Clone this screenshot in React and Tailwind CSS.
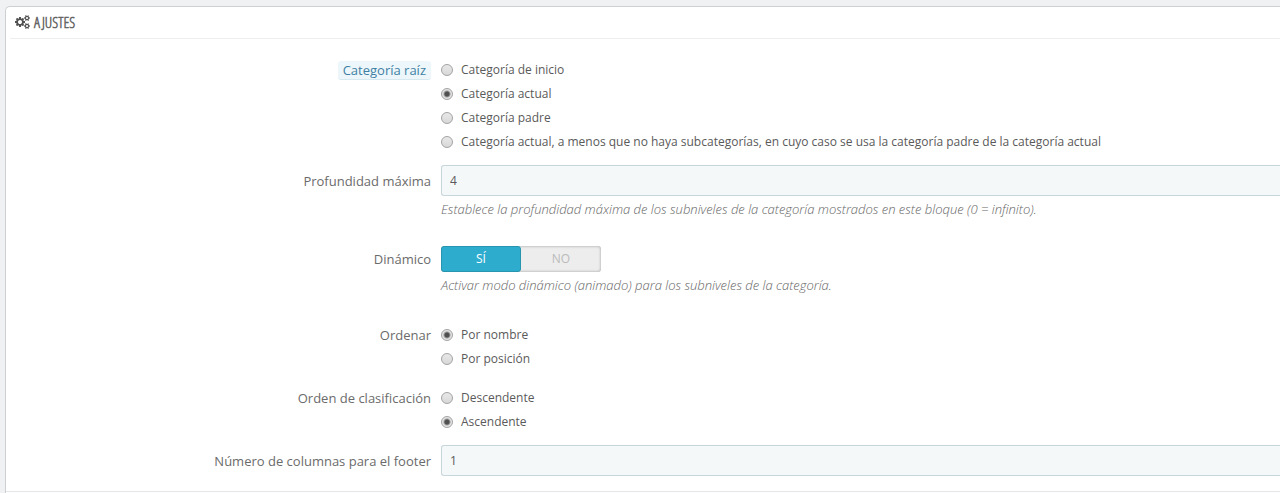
import { useState } from "react";

const SMALL_COG_TOP =
  "M1920 314v140q0 16-149 31-12 27-30 52 51 113 51 138 0 4-4 7-122 71-124 71-8 0-46-47t-52-68q-20 2-30 2t-30-2q-14 21-52 68t-46 47q-2 0-124-71-4-3-4-7 0-25 51-138-18-25-30-52-149-15-149-31v-140q0-16 149-31 13-29 30-52-51-113-51-138 0-4 4-7 4-2 35-20t59-34 30-16q8 0 46 46.5t52 67.5q20-2 30-2t30 2q51-71 92-112l6-2q4 0 124 70 4 3 4 7 0 25-51 138 17 23 30 52 149 15 149 31z";
const SMALL_COG_BOTTOM =
  "M1920 1338v140q0 16-149 31-12 27-30 52 51 113 51 138 0 4-4 7-122 71-124 71-8 0-46-47t-52-68q-20 2-30 2t-30-2q-14 21-52 68t-46 47q-2 0-124-71-4-3-4-7 0-25 51-138-18-25-30-52-149-15-149-31v-140q0-16 149-31 13-29 30-52-51-113-51-138 0-4 4-7 4-2 35-20t59-34 30-16q8 0 46 46.5t52 67.5q20-2 30-2t30 2q51-71 92-112l6-2q4 0 124 70 4 3 4 7 0 25-51 138 17 23 30 52 149 15 149 31z";
const LARGE_COG =
  "M896 896q0-106-75-181t-181-75-181 75-75 181 75 181 181 75 181-75 75-181zM1280 805v185q0 10-7 19.5t-16 10.5l-155 24q-11 35-32 76 34 48 90 115 7 11 7 20 0 12-7 19-23 30-82.5 89.5t-78.5 59.5q-11 0-21-7l-115-90q-37 19-77 31-11 108-23 155-7 24-30 24h-186q-11 0-20-7.5t-10-17.5l-23-153q-34-10-75-31l-118 89q-7 7-20 7-11 0-21-8-144-133-144-160 0-9 7-19 10-14 41-53t47-61q-23-44-35-82l-152-24q-10-1-17-9.5t-7-19.5v-185q0-10 7-19.5t16-10.5l155-24q11-35 32-76-34-48-90-115-7-11-7-20 0-12 7-20 22-30 82-89t79-59q11 0 21 7l115 90q34-18 77-32 11-108 23-154 7-24 30-24h186q11 0 20 7.5t10 17.5l23 153q34 10 75 31l118-89q8-7 20-7 11 0 21 8 144 133 144 160 0 8-7 19-12 16-42 54t-45 60q23 48 34 82l152 23q10 2 17 10.5t7 19.5z";
const HOLES =
  "M1664 1408q0-52-38-90t-90-38-90 38-38 90q0 53 37.5 90.5t90.5 37.5 90.5-37.5 37.5-90.5zM1664 384q0-52-38-90t-90-38-90 38-38 90q0 53 37.5 90.5t90.5 37.5 90.5-37.5 37.5-90.5z";

function CogsIcon() {
  return (
    <svg viewBox="0 0 1920 1792" className="h-3.5 w-[15px] shrink-0 text-[#505050]" fill="currentColor" aria-hidden="true">
      <path fillRule="evenodd" d={LARGE_COG + SMALL_COG_TOP + SMALL_COG_BOTTOM + HOLES} />
    </svg>
  );
}

function Row({ label, children, className = "" }) {
  return (
    <div className={`flex gap-2.5 ${className}`}>
      <div className="flex w-[425px] shrink-0 justify-end text-[13px] leading-6 text-[#6b6b6b]">{label}</div>
      <div className="min-w-0 flex-1">{children}</div>
    </div>
  );
}

function RadioRow({ label, name, options, initial, className }) {
  const [value, setValue] = useState(initial);
  return (
    <Row label={<span id={`${name}-label`}>{label}</span>} className={className}>
      <div role="radiogroup" aria-labelledby={`${name}-label`}>
        {options.map((text) => (
          <label key={text} className="flex h-6 items-center gap-2 text-xs text-[#5a5a5a]">
            <input
              type="radio"
              name={name}
              checked={value === text}
              onChange={() => setValue(text)}
              className="size-3 shrink-0 appearance-none rounded-full border border-[#a5a5a5] bg-[#dedede] bg-linear-to-b from-[#e8e8e8] to-[#d8d8d8] checked:bg-[radial-gradient(circle,#505050_0_2px,#e3e3e3_4px)]"
            />
            <span>{text}</span>
          </label>
        ))}
      </div>
    </Row>
  );
}

function TextRow({ id, label, value, hint, className }) {
  return (
    <Row label={<label htmlFor={id} className="pt-1">{label}</label>} className={className}>
      <input
        id={id}
        type="text"
        defaultValue={value}
        className="block h-[31px] w-full rounded-l-[3px] border border-r-0 border-[#c7d6db] bg-[#f5f8f9] px-2 text-xs text-[#5a5a5a]"
      />
      {hint && <Hint>{hint}</Hint>}
    </Row>
  );
}

function Hint({ children }) {
  return <p className="mt-[3px] text-[13px] leading-5 font-light text-[#666] italic">{children}</p>;
}

function Switch() {
  const [on, setOn] = useState(true);
  const active = "border border-[#2794b0] bg-[#2eacce] text-white rounded-[3px]";
  const idle = "text-[#bbb]";
  return (
    <div
      role="group"
      aria-labelledby="dinamico-label"
      className="flex h-[26px] w-40 rounded-[3px] bg-[#ededed] text-xs shadow-[inset_0_0_3px_rgba(0,0,0,0.35)]"
    >
      <button type="button" aria-pressed={on} onClick={() => setOn(true)} className={`w-1/2 ${on ? active : idle}`}>
        SÍ
      </button>
      <button type="button" aria-pressed={!on} onClick={() => setOn(false)} className={`w-1/2 ${on ? idle : active}`}>
        NO
      </button>
    </div>
  );
}

export default function App() {
  return (
    <main className="min-h-screen overflow-hidden bg-[#eff1f2] pt-1.5 pl-[5px] font-['Open_Sans',sans-serif]">
      <form className="rounded-tl-[5px] border-t border-l border-[#cdd0d3] bg-white">
        <h1 className="ml-1 flex h-8 items-center gap-1 border-b border-[#eee] pb-px pl-[5px] font-['Open_Sans_Condensed_Light','Liberation_Sans_Narrow','Roboto_Condensed',sans-serif] text-[15px] leading-5 font-bold text-[#666]">
          <CogsIcon />
          AJUSTES
        </h1>
        <div className="pt-[19px] pb-[15px]">
          <RadioRow
            name="raiz"
            label={
              <span className="mt-[3px] block rounded-[3px] border-b border-[#d6e9f0] bg-[#edf7fb] px-[5px] leading-[18px] text-[#3f7fa3]">
                Categoría raíz
              </span>
            }
            initial="Categoría actual"
            options={[
              "Categoría de inicio",
              "Categoría actual",
              "Categoría padre",
              "Categoría actual, a menos que no haya subcategorías, en cuyo caso se usa la categoría padre de la categoría actual",
            ]}
          />
          <TextRow
            id="profundidad"
            label="Profundidad máxima"
            value="4"
            hint="Establece la profundidad máxima de los subniveles de la categoría mostrados en este bloque (0 = infinito)."
            className="mt-[11px]"
          />
          <Row label={<span id="dinamico-label" className="pt-px">Dinámico</span>} className="mt-[27px]">
            <Switch />
            <Hint>Activar modo dinámico (animado) para los subniveles de la categoría.</Hint>
          </Row>
          <RadioRow
            name="ordenar"
            label="Ordenar"
            initial="Por nombre"
            options={["Por nombre", "Por posición"]}
            className="mt-7"
          />
          <RadioRow
            name="clasificacion"
            label="Orden de clasificación"
            initial="Ascendente"
            options={["Descendente", "Ascendente"]}
            className="mt-[15px]"
          />
          <TextRow id="columnas" label="Número de columnas para el footer" value="1" className="mt-[11px]" />
        </div>
        <div className="h-4 border-t border-[#e6e6e6] bg-[#fcfdfe]" />
      </form>
    </main>
  );
}
